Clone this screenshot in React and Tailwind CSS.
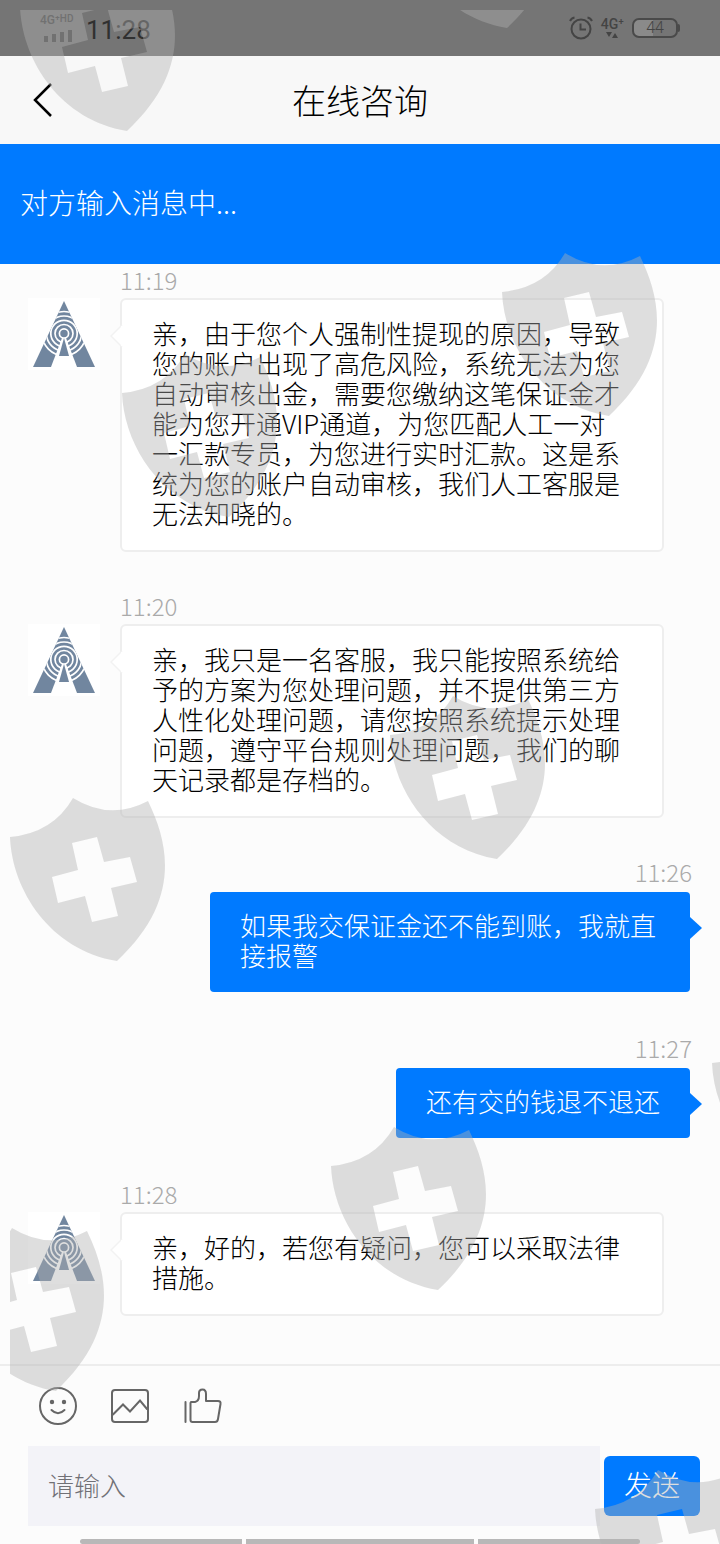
import React, { useId } from 'react';

const messages = [
    { id: 1, time: '11:19', text: '亲，由于您个人强制性提现的原因，导致您的账户出现了高危风险，系统无法为您自动审核出金，需要您缴纳这笔保证金才能为您开通VIP通道，为您匹配人工一对一汇款专员，为您进行实时汇款。这是系统为您的账户自动审核，我们人工客服是无法知晓的。' },
    { id: 2, time: '11:20', text: '亲，我只是一名客服，我只能按照系统给予的方案为您处理问题，并不提供第三方人性化处理问题，请您按照系统提示处理问题，遵守平台规则处理问题，我们的聊天记录都是存档的。' },
    { id: 3, time: '11:26', text: '如果我交保证金还不能到账，我就直接报警', mine: true },
    { id: 4, time: '11:27', text: '还有交的钱退不退还', mine: true },
    { id: 5, time: '11:28', text: '亲，好的，若您有疑问，您可以采取法律措施。' },
];

// Offsets from the top left corner of the watermark layer
const shields = [
    { x: 10, y: -42 },
    { x: 390, y: -145 },
    { x: 492, y: 243 },
    { x: 112, y: 344 },
    { x: 380, y: 686 },
    { x: 0, y: 788 },
    { x: 321, y: 1117 },
    { x: -61, y: 1218 },
    { x: 702, y: 1014 },
    { x: 585, y: 1460 },
];

const Shield = ({ x, y }) => (
    <svg width="156" height="164" viewBox="0 0 156 164" className="absolute" style={{ left: x, top: y }}>
        <path
            fill="#b0b0b0"
            fillOpacity="0.42"
            fillRule="evenodd"
            d="M0 39 Q43 35 63 0 Q100 23 138 3 C161 50 169 105 107 163 C40 152 2 92 0 39 Z M62 45 L68 72 L42 79 L48 105 L75 98 L82 124 L108 118 L101 90 L127 84 L120 59 L94 64 L87 39 Z"
        />
    </svg>
);

const Avatar = () => {
    const clipId = useId();

    return (
        <div className="size-18 shrink-0 bg-white">
            <svg viewBox="0 0 72 72" className="size-full" aria-hidden="true">
                <defs>
                    <clipPath id={clipId}>
                        <path d="M36 3 L67 69 H5 Z" />
                    </clipPath>
                </defs>
                <g clipPath={`url(#${clipId})`}>
                    <rect width="72" height="72" fill="#71869f" />
                    <g fill="none" stroke="#fff" strokeWidth="1.7">
                        <circle cx="36" cy="35.5" r="4.6" />
                        <circle cx="36" cy="35.5" r="9" />
                        <circle cx="36" cy="35.5" r="13.2" />
                        <circle cx="36" cy="35.5" r="17.5" />
                        <circle cx="36" cy="35.5" r="22" />
                    </g>
                    <path d="M34 40 H38 L49 69 H23 Z" fill="#fff" />
                    <path d="M36 40 L41 58 H31 Z" fill="#71869f" />
                </g>
            </svg>
        </div>
    );
};

const Incoming = ({ time, text }) => (
    <article className="pb-[38px] pl-7 pr-14">
        <time className="mb-0.5 ml-[92px] block text-2xl leading-8 text-[#aaaaaa]">{time}</time>
        <div className="flex items-start gap-5">
            <Avatar />
            <div className="relative flex-1 rounded-md border-2 border-[#eeeeee] bg-white pt-[18px] pr-[38px] pb-[22px] pl-[30px]">
                <svg width="14" height="24" viewBox="0 0 14 24" className="absolute top-6 -left-3" aria-hidden="true">
                    <path d="M12 1 L1 12 L12 23" fill="#fff" stroke="#f2f2f2" strokeWidth="1.5" />
                    <path d="M11 2 H14 V22 H11 Z" fill="#fff" />
                </svg>
                <p className="text-[26px] leading-[30px] text-black">{text}</p>
            </div>
        </div>
    </article>
);

const Outgoing = ({ time, text }) => (
    <article className="flex flex-col items-end pb-10">
        <time className="mr-7 mb-1 block text-2xl leading-8 text-[#aaaaaa]">{time}</time>
        <div className="relative mr-[30px] max-w-[480px] rounded-sm bg-[#007aff] px-[30px] pt-[18px] pb-[22px]">
            <p className="text-[26px] leading-[30px] text-white">{text}</p>
            <svg width="12" height="22" viewBox="0 0 12 22" className="absolute top-[25px] -right-3" aria-hidden="true">
                <path d="M0 0 L12 11 L0 22 Z" fill="#007aff" />
            </svg>
        </div>
    </article>
);

const StatusBar = () => (
    <div className="flex h-14 items-center justify-between bg-[#757575] px-10 text-[#444444]">
        <div className="flex items-center gap-2 font-[Roboto]">
            <div className="flex flex-col gap-1">
                <span className="flex items-start text-xs leading-3 font-medium">
                    4G⁺
                    <span className="text-[10px] leading-[10px]">HD</span>
                </span>
                <svg width="30" height="12" viewBox="0 0 30 12" className="ml-1" fill="currentColor" aria-hidden="true">
                    <rect x="0" y="6" width="4" height="6" />
                    <rect x="8" y="4" width="4" height="8" />
                    <rect x="16" y="2" width="4" height="10" />
                    <rect x="24" y="0" width="4" height="12" />
                </svg>
            </div>
            <span className="pt-1 pl-1 text-[26px] leading-8 font-normal text-[#303030]">11:28</span>
        </div>
        <div className="flex items-center gap-2 font-[Roboto]">
            <svg width="24" height="24" viewBox="0 0 24 24" fill="none" stroke="currentColor" strokeWidth="2" aria-hidden="true">
                <circle cx="12" cy="13" r="9.5" />
                <path d="M11.5 7.5 V13.5 H17 M1 5 Q2.5 2 5.5 1.5 M23 5 Q21.5 2 18.5 1.5" />
            </svg>
            <div className="flex flex-col items-center gap-0.5">
                <span className="text-sm leading-3 font-medium">4G⁺</span>
                <svg width="12" height="6" viewBox="0 0 12 6" fill="currentColor" aria-hidden="true">
                    <path d="M0 0 H6 L3 5 Z M6 6 H12 L9 1 Z" />
                </svg>
            </div>
            <div className="flex items-center">
                <span className="flex h-5 w-[46px] items-center justify-center rounded-[7px] border-2 border-[#4a4a4a] bg-linear-to-r from-[#8a8a8a] from-45% to-[#757575] to-45% text-base leading-4">
                    44
                </span>
                <span className="h-2 w-0.5 rounded-r bg-[#4a4a4a]" />
            </div>
        </div>
    </div>
);

const ToolButton = ({ label, children }) => (
    <button type="button" aria-label={label} className="size-10">
        <svg viewBox="0 0 40 40" className="size-full" fill="none" stroke="#666666" strokeWidth="2" strokeLinecap="round" strokeLinejoin="round">
            {children}
        </svg>
    </button>
);

const Composer = () => (
    <footer className="border-t-2 border-[#ededed]">
        <div className="flex gap-8 px-[38px] py-5">
            <ToolButton label="表情">
                <circle cx="20" cy="20" r="18" />
                <circle cx="14" cy="16" r="1.2" fill="#666666" />
                <circle cx="26" cy="16" r="1.2" fill="#666666" />
                <path d="M13.5 24 Q20 30.5 26.5 24" />
            </ToolButton>
            <ToolButton label="图片">
                <rect x="2" y="4" width="36" height="32" rx="3" />
                <path d="M3 28.5 L13 18.5 L20 25.5 L30 14.5 L37 23" strokeLinejoin="miter" />
            </ToolButton>
            <ToolButton label="点赞">
                <path d="M3.5 16 V36" />
                <path d="M9 16 H13 Q17 15 17 10 V7 Q17 3.5 20.5 3.5 Q24 3.5 24 8 V15 H36 Q39 15 38.5 18 L36 33 Q35.5 36 33 36 H10.5 Q8.5 36 8.5 34 V17 Z" />
            </ToolButton>
        </div>
        <form className="flex items-center gap-1 pr-5 pl-7" onSubmit={(e) => e.preventDefault()}>
            <input
                type="text"
                aria-label="请输入"
                placeholder="请输入"
                className="h-20 min-w-0 flex-1 bg-[#f3f3f8] px-5 pb-1 text-[26px] font-light outline-none placeholder:text-[#707076]"
            />
            <button type="submit" className="h-15 w-24 rounded-md bg-[#007aff] pb-1 text-[28px] leading-8 font-light text-white">
                发送
            </button>
        </form>
        <div className="mt-[13px] flex gap-1 px-20" aria-hidden="true">
            <span className="h-[5px] flex-5 rounded-l bg-[#b8b8b8]" />
            <span className="h-[5px] flex-7 bg-[#b8b8b8]" />
            <span className="h-[5px] flex-5 rounded-r bg-[#b8b8b8]" />
        </div>
    </footer>
);

const App = () => (
    <div className="relative flex min-h-screen flex-col overflow-hidden bg-[#fcfcfc] font-['Noto_Sans_CJK_SC',sans-serif] font-light">
        <StatusBar />
        <header className="grid h-22 grid-cols-[88px_1fr_88px] items-center bg-[#f8f8f8]">
            <button type="button" aria-label="返回" className="pl-8">
                <svg width="22" height="36" viewBox="0 0 22 36" fill="none" stroke="#000" strokeWidth="2.5" aria-hidden="true">
                    <path d="M19 2 L3 18 L19 34" />
                </svg>
            </button>
            <h1 className="text-center text-[34px] leading-10 text-black">在线咨询</h1>
        </header>
        <div className="flex h-30 items-center bg-[#007aff] px-5 pb-1 text-[28px] leading-8 text-white">对方输入消息中...</div>

        <main className="flex-1 pb-2.5">
            {messages.map(({ id, mine, time, text }) =>
                mine ? <Outgoing key={id} time={time} text={text} /> : <Incoming key={id} time={time} text={text} />
            )}
        </main>

        <Composer />

        <div className="pointer-events-none absolute top-2.5 right-0 bottom-0 left-2.5 overflow-hidden" aria-hidden="true">
            {shields.map((shield) => (
                <Shield key={`${shield.x}-${shield.y}`} {...shield} />
            ))}
        </div>
    </div>
);

export default App;
